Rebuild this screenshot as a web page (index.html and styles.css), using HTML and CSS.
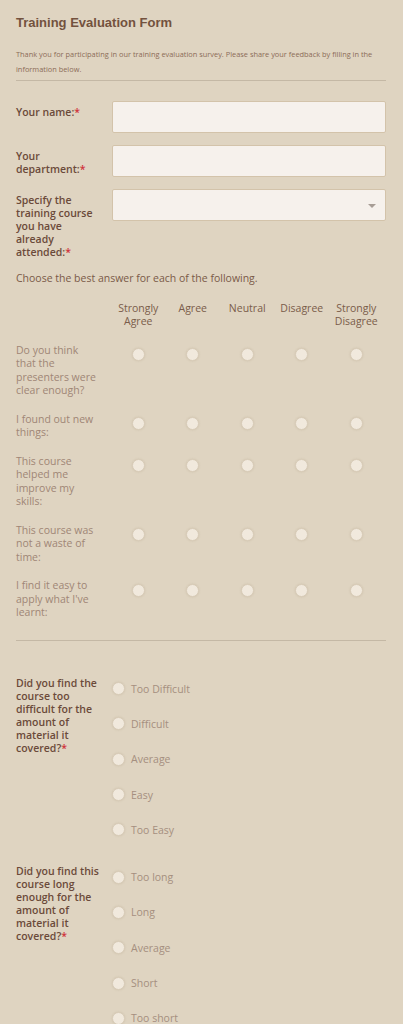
FILE: index.html
```html
<!DOCTYPE html>
<html>
<head>
<meta charset="utf-8">
<link rel="stylesheet" href="styles.css">
</head>
<body>
<div class="form">
  <h1 class="title">Training Evaluation Form</h1>
  <p class="desc">Thank you for participating in our training evaluation survey. Please share your feedback by filling in the information below.</p>
  <hr class="divider top-divider">

  <div class="field">
    <label class="label">Your name:<span class="req">*</span></label>
    <div class="input"></div>
  </div>
  <div class="field">
    <label class="label">Your<br>department:<span class="req">*</span></label>
    <div class="input"></div>
  </div>
  <div class="field">
    <label class="label">Specify the<br>training course<br>you have<br>already<br>attended:<span class="req">*</span></label>
    <div class="input select"><span class="arrow"></span></div>
  </div>

  <p class="instr">Choose the best answer for each of the following.</p>

  <div class="matrix">
    <div class="mhead"></div>
    <div class="mhead">Strongly<br>Agree</div>
    <div class="mhead">Agree</div>
    <div class="mhead">Neutral</div>
    <div class="mhead">Disagree</div>
    <div class="mhead">Strongly<br>Disagree</div>

    <div class="mlabel">Do you think<br>that the<br>presenters were<br>clear enough?</div>
    <div class="mcell"><span class="radio"></span></div>
    <div class="mcell"><span class="radio"></span></div>
    <div class="mcell"><span class="radio"></span></div>
    <div class="mcell"><span class="radio"></span></div>
    <div class="mcell"><span class="radio"></span></div>

    <div class="mlabel">I found out new<br>things:</div>
    <div class="mcell"><span class="radio"></span></div>
    <div class="mcell"><span class="radio"></span></div>
    <div class="mcell"><span class="radio"></span></div>
    <div class="mcell"><span class="radio"></span></div>
    <div class="mcell"><span class="radio"></span></div>

    <div class="mlabel">This course<br>helped me<br>improve my<br>skills:</div>
    <div class="mcell"><span class="radio"></span></div>
    <div class="mcell"><span class="radio"></span></div>
    <div class="mcell"><span class="radio"></span></div>
    <div class="mcell"><span class="radio"></span></div>
    <div class="mcell"><span class="radio"></span></div>

    <div class="mlabel">This course was<br>not a waste of<br>time:</div>
    <div class="mcell"><span class="radio"></span></div>
    <div class="mcell"><span class="radio"></span></div>
    <div class="mcell"><span class="radio"></span></div>
    <div class="mcell"><span class="radio"></span></div>
    <div class="mcell"><span class="radio"></span></div>

    <div class="mlabel">I find it easy to<br>apply what I've<br>learnt:</div>
    <div class="mcell"><span class="radio"></span></div>
    <div class="mcell"><span class="radio"></span></div>
    <div class="mcell"><span class="radio"></span></div>
    <div class="mcell"><span class="radio"></span></div>
    <div class="mcell"><span class="radio"></span></div>
  </div>

  <hr class="divider mid-divider">

  <div class="question">
    <div class="qlabel">Did you find the<br>course too<br>difficult for the<br>amount of<br>material it<br>covered?<span class="req">*</span></div>
    <div class="options">
      <div class="option"><span class="radio"></span><span class="otext">Too Difficult</span></div>
      <div class="option"><span class="radio"></span><span class="otext">Difficult</span></div>
      <div class="option"><span class="radio"></span><span class="otext">Average</span></div>
      <div class="option"><span class="radio"></span><span class="otext">Easy</span></div>
      <div class="option"><span class="radio"></span><span class="otext">Too Easy</span></div>
    </div>
  </div>

  <div class="question">
    <div class="qlabel">Did you find this<br>course long<br>enough for the<br>amount of<br>material it<br>covered?<span class="req">*</span></div>
    <div class="options">
      <div class="option"><span class="radio"></span><span class="otext">Too long</span></div>
      <div class="option"><span class="radio"></span><span class="otext">Long</span></div>
      <div class="option"><span class="radio"></span><span class="otext">Average</span></div>
      <div class="option"><span class="radio"></span><span class="otext">Short</span></div>
      <div class="option"><span class="radio"></span><span class="otext">Too short</span></div>
    </div>
  </div>
</div>
</body>
</html>
```

FILE: styles.css
```css
html, body {
  margin: 0;
  padding: 0;
  background: #dfd4c1;
}
body {
  font-family: "Open Sans", sans-serif;
  color: #6b4a3a;
}
.form {
  padding: 15px 17px 40px 16px;
}
.title {
  margin: 0;
  font-family: "Liberation Sans", Arial, sans-serif;
  font-weight: bold;
  font-size: 13px;
  line-height: 16px;
  color: #73523e;
}
.desc {
  margin: 16px 0 0 0;
  font-size: 7.4px;
  line-height: 15px;
  color: #8c6c58;
}
.divider {
  border: 0;
  border-top: 1px solid #c4b8a5;
  margin: 0;
}
.top-divider {
  margin-top: 3px;
  margin-bottom: 20px;
}
.field {
  display: flex;
  gap: 12px;
  margin-bottom: 12px;
}
.label {
  width: 84px;
  flex: 0 0 84px;
  padding-top: 5px;
  font-size: 10.5px;
  line-height: 13px;
  font-weight: 600;
  white-space: nowrap;
  color: #6b4a3a;
}
.req {
  color: #d0323a;
}
.input {
  flex: 1;
  height: 30px;
  background: #f6f1ec;
  border: 1px solid #d3c3aa;
  border-radius: 2px;
  position: relative;
}
.select .arrow {
  position: absolute;
  right: 9px;
  top: 14px;
  width: 0;
  height: 0;
  border-left: 4px solid transparent;
  border-right: 4px solid transparent;
  border-top: 4px solid #a79d95;
}
.instr {
  margin: 0;
  font-size: 10.5px;
  line-height: 14px;
  color: #7a5a48;
}
.matrix {
  margin-top: 17px;
  display: grid;
  grid-template-columns: 95px repeat(5, 54.5px);
}
.mhead {
  text-align: center;
  font-size: 10.5px;
  line-height: 13px;
  color: #7a5c4a;
  padding-bottom: 8px;
  white-space: nowrap;
}
.mlabel {
  padding: 7.5px 0 7.5px 0;
  font-size: 10.5px;
  line-height: 13.5px;
  color: #a08676;
  white-space: nowrap;
}
.mcell {
  display: flex;
  justify-content: center;
  align-items: flex-start;
  padding-top: 12px;
}
.radio {
  display: inline-block;
  flex: 0 0 auto;
  box-sizing: border-box;
  width: 13px;
  height: 13px;
  border-radius: 50%;
  background: #f1e9dd;
  border: 1px solid #d8ccb8;
  box-shadow: 0 0 2px rgba(150, 130, 100, 0.25);
}
.mid-divider {
  margin-top: 13px;
}
.question {
  display: flex;
  gap: 12px;
  margin-top: 12px;
}
.mid-divider + .question {
  margin-top: 30px;
}
.qlabel {
  width: 84px;
  flex: 0 0 84px;
  padding-top: 6px;
  font-size: 10.5px;
  line-height: 13px;
  font-weight: 600;
  white-space: nowrap;
  color: #6b4a3a;
}
.options {
  display: flex;
  flex-direction: column;
}
.option {
  height: 35.3px;
  display: flex;
  align-items: center;
  gap: 6px;
  font-size: 10.5px;
  color: #a58f7f;
}
```
